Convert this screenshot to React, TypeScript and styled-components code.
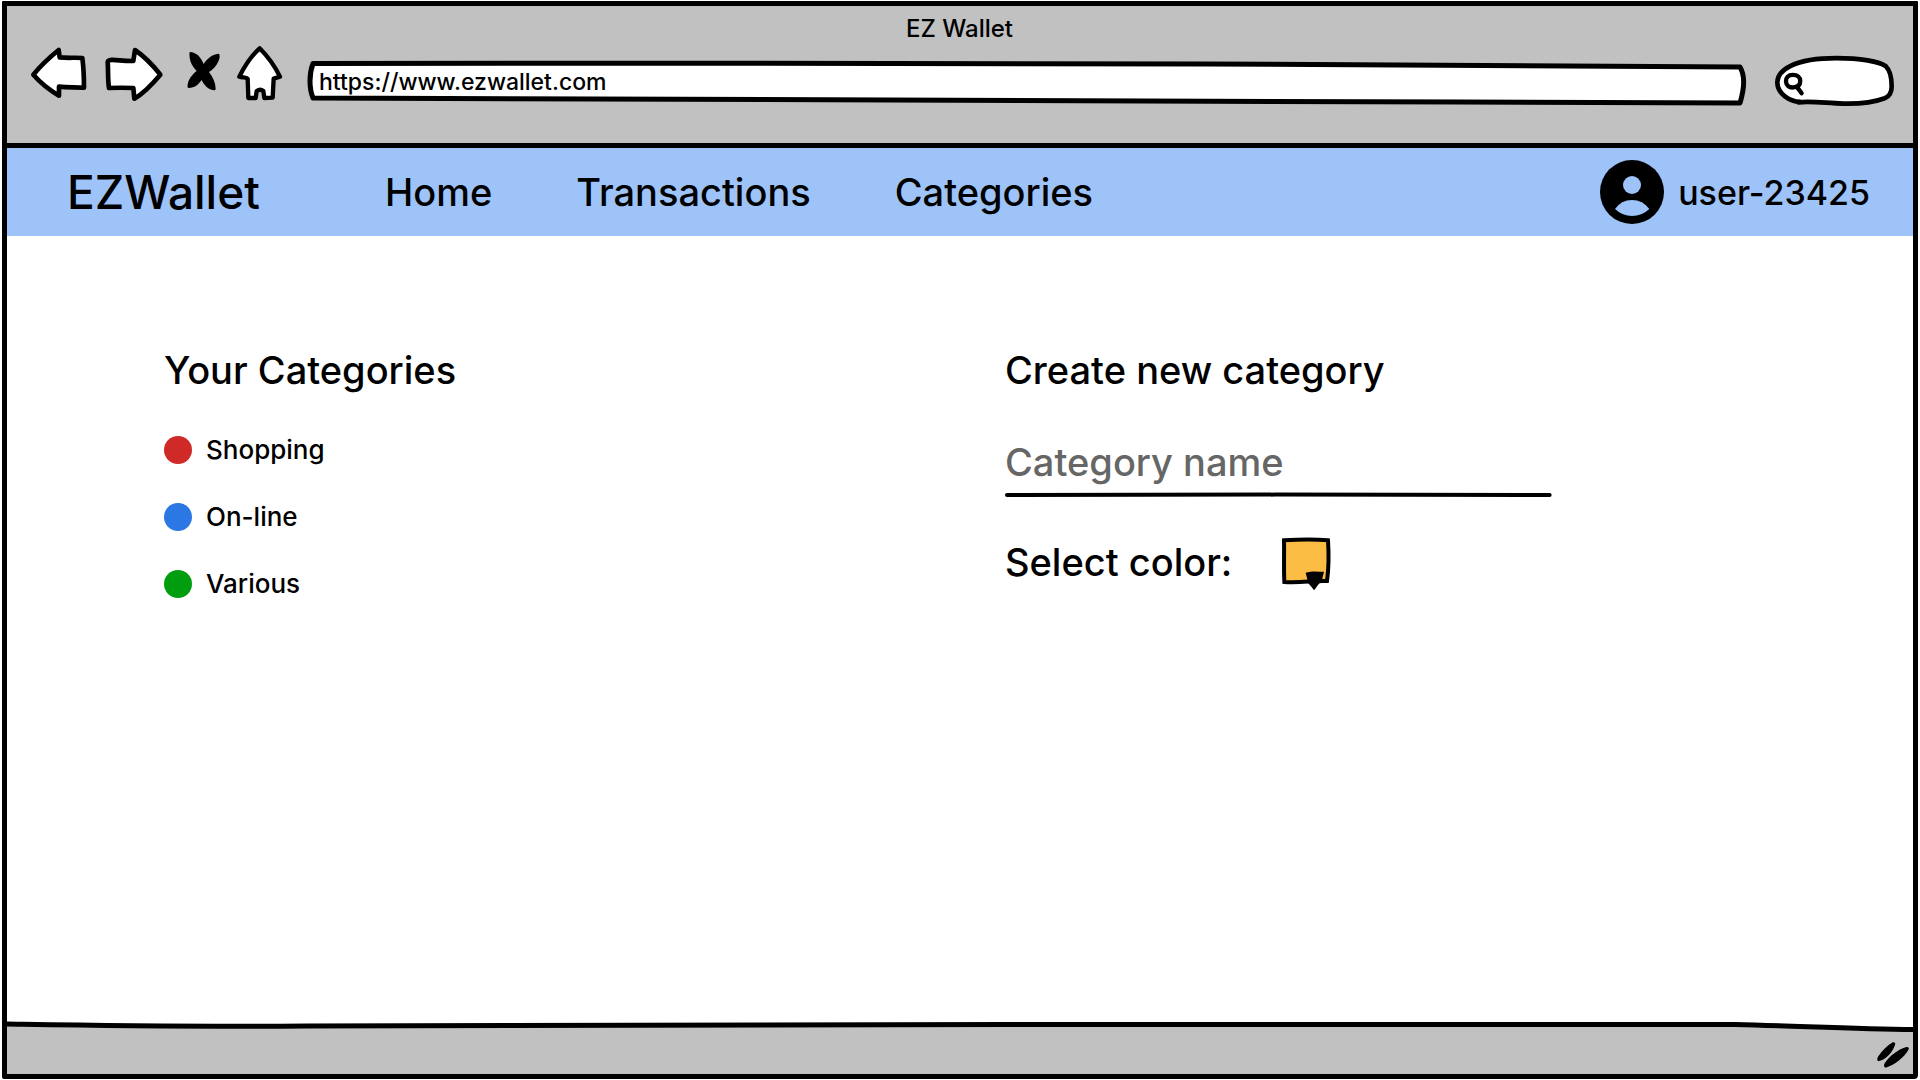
import React from "react";
import styled, { createGlobalStyle } from "styled-components";

const ink = "#000000";
const chrome = "#c1c1c1";
const sky = "#9ec3f8";

const GlobalStyle = createGlobalStyle`
  * { box-sizing: border-box; }
  body {
    margin: 0;
    background: #ffffff;
    color: ${ink};
    font-family: Inter, "Liberation Sans", sans-serif;
    font-weight: 500;
  }
  button, input { font: inherit; color: inherit; }
`;

const Window = styled.div`
  display: flex;
  flex-direction: column;
  min-height: calc(100vh - 2px);
  margin: 1px 2px;
  border: 5px solid ${ink};
  border-radius: 1px 1px 4px 2px;
`;

const Chrome = styled.header`
  padding: 6px 19px 37px 24px;
  background: ${chrome};
  border-bottom: 5px solid ${ink};
`;

const WindowTitle = styled.div`
  padding-right: 6px;
  text-align: center;
  font-size: 24px;
  line-height: 34px;
`;

const Toolbar = styled.div`
  display: flex;
  align-items: flex-end;
`;

const ToolGroup = styled.div`
  display: flex;
  align-items: flex-start;
  gap: 18px;
  padding-bottom: 5px;
`;

const PlainButton = styled.button`
  display: block;
  padding: 0;
  border: 0;
  background: none;
  cursor: pointer;
`;

const Sketch = styled.svg<{ $solid?: boolean }>`
  display: block;
  overflow: visible;
  stroke: ${(p) => (p.$solid ? "none" : ink)};
  stroke-linejoin: round;
  stroke-linecap: round;
`;

const Backdrop = styled(Sketch)`
  position: absolute;
  inset: 0;
  width: 100%;
  height: 100%;
`;

const AddressBar = styled.label`
  position: relative;
  flex: 1;
  height: 46px;
  margin: 0 28px 0 24px;
`;

const AddressInput = styled.input`
  position: relative;
  display: block;
  width: 100%;
  height: 44px;
  padding: 0 12px;
  border: 0;
  outline: 0;
  background: none;
  font-size: 23px;
`;

const SearchBox = styled.label`
  position: relative;
  width: 119px;
  height: 50px;
`;

const SearchInput = styled.input`
  position: relative;
  display: block;
  width: 100%;
  height: 100%;
  padding: 0 12px 0 32px;
  border: 0;
  outline: 0;
  background: none;
  font-size: 23px;
`;

const SiteBar = styled.nav`
  display: flex;
  align-items: center;
  height: 88px;
  padding: 0 43px 0 60px;
  background: ${sky};
`;

const Brand = styled.a`
  flex: 0 0 318px;
  color: inherit;
  text-decoration: none;
  font-size: 46px;
`;

const Links = styled.div`
  display: flex;
  flex: 1;
  gap: 84px;
`;

const NavLink = styled.a`
  color: inherit;
  text-decoration: none;
  font-size: 38px;
`;

const Account = styled.a`
  display: flex;
  align-items: center;
  gap: 14px;
  color: inherit;
  text-decoration: none;
  font-size: 34px;
`;

const Content = styled.main`
  display: grid;
  grid-template-columns: 1fr 1fr;
  flex: 1;
  align-items: start;
  padding: 110px 67px 40px 157px;
`;

const Heading = styled.h2`
  margin: 0;
  font-size: 38px;
  font-weight: 500;
  line-height: 48px;
`;

const CategoryList = styled.ul`
  display: flex;
  flex-direction: column;
  gap: 31px;
  margin: 38px 0 0;
  padding: 0;
  list-style: none;
`;

const Category = styled.li`
  display: flex;
  align-items: center;
  gap: 14px;
  font-size: 26px;
  line-height: 36px;
`;

const Dot = styled.span<{ $color: string }>`
  width: 28px;
  height: 28px;
  border-radius: 50%;
  background: ${(p) => p.$color};
`;

const NameField = styled.div`
  width: 65%;
  margin-top: 44px;
`;

const NameInput = styled.input`
  display: block;
  width: 100%;
  height: 48px;
  padding: 0;
  border: 0;
  outline: 0;
  background: none;
  font-size: 38px;
  &::placeholder { color: #666666; opacity: 1; }
`;

const Rule = styled(Sketch)`
  width: 100%;
  height: 18px;
`;

const ColorRow = styled.div`
  display: flex;
  align-items: flex-start;
  gap: 50px;
  margin-top: 34px;
  font-size: 38px;
  line-height: 48px;
`;

const StatusBar = styled.footer`
  position: relative;
  display: flex;
  align-items: center;
  justify-content: flex-end;
  height: 52px;
  padding: 14px 4px 0 0;
`;

const Grip = styled(Sketch)`
  position: relative;
`;

const categories = [
  { name: "Shopping", color: "#cf2a27" },
  { name: "On-line", color: "#2b78e4" },
  { name: "Various", color: "#009e0f" },
];

export default function App() {
  return (
    <>
      <GlobalStyle />
      <Window>
        <Chrome>
          <WindowTitle>EZ Wallet</WindowTitle>
          <Toolbar>
            <ToolGroup>
              <PlainButton type="button" aria-label="Back">
                <Sketch width="56" height="55" viewBox="34 18 168 165" fill="#fff" strokeWidth="14">
                  <path d="M41 104C62 78 90 52 117 30L120 52C145 55 165 52 188 54C192 85 193 115 193 143C170 141 145 143 118 140L118 167C90 150 62 128 41 104Z" />
                </Sketch>
              </PlainButton>
              <PlainButton type="button" aria-label="Forward">
                <Sketch width="58" height="55" viewBox="256 18 174 165" fill="#fff" strokeWidth="14">
                  <path d="M264 66C266 58 280 59 300 61C318 63 330 63 341 63L346 30C375 50 400 76 422 104C400 130 375 158 344 176L341 144C315 143 290 143 268 144C264 120 266 90 264 66Z" />
                </Sketch>
              </PlainButton>
              <PlainButton type="button" aria-label="Stop">
                <Sketch $solid width="38" height="55" viewBox="484 18 114 165">
                  <path d="M510 36C532 37 545 54 552 72C561 58 575 43 597 41C602 43 600 55 597 62C590 78 580 89 568 96C580 112 588 130 588 146C588 150 586 151 582 151C564 148 554 136 546 120C535 135 525 143 508 144C503 144 503 140 504 134C506 118 518 103 531 93C514 76 507 55 510 36Z" />
                </Sketch>
              </PlainButton>
              <PlainButton type="button" aria-label="Home page">
                <Sketch width="46" height="55" viewBox="652 18 138 165" fill="#fff" strokeWidth="13">
                  <path d="M720 25C692 50 672 84 659 110C668 113 680 112 684 116L686 174L708 174L711 153Q722 146 731 153L734 174L759 173L762 116L781 110C766 80 745 50 720 25Z" />
                </Sketch>
              </PlainButton>
            </ToolGroup>
            <AddressBar>
              <Backdrop viewBox="0 0 1440 46" preserveAspectRatio="none" fill="#fff" strokeWidth="5">
                <path vectorEffect="non-scaling-stroke" d="M6 3.5C300 3 700 3 900 4L1433 7C1439 17 1437 30 1433 43C1000 42 650 39 6 38C2 28 2 14 6 3.5Z" />
              </Backdrop>
              <AddressInput aria-label="Address" defaultValue="https://www.ezwallet.com" />
            </AddressBar>
            <SearchBox>
              <Backdrop viewBox="645 172 358 148" preserveAspectRatio="none" fill="#fff" strokeWidth="14">
                <path d="M720 308C690 306 652 285 652 250C652 215 700 178 830 178C900 178 960 188 978 202C994 217 996 240 996 262C996 285 985 293 975 297C940 310 890 314 850 313C800 312 760 305 715 309" />
                <path fill="none" strokeWidth="13" d="M699 228C685 228 677 236 678 248C679 260 688 266 700 265C713 264 721 257 721 246C721 235 713 228 699 228ZM712 265L725 282" />
              </Backdrop>
              <SearchInput aria-label="Search" />
            </SearchBox>
          </Toolbar>
        </Chrome>

        <SiteBar>
          <Brand href="#home">EZWallet</Brand>
          <Links>
            <NavLink href="#home">Home</NavLink>
            <NavLink href="#transactions">Transactions</NavLink>
            <NavLink href="#categories">Categories</NavLink>
          </Links>
          <Account href="#account">
            <Sketch $solid width="64" height="64" viewBox="30 30 192 192">
              <circle cx="126" cy="126" r="96" />
              <circle cx="126" cy="105" r="27" fill={sky} />
              <path fill={sky} d="M75 177Q94 150 126 150Q158 150 178 177Q156 198 126 198Q97 198 75 177Z" />
            </Sketch>
            user-23425
          </Account>
        </SiteBar>

        <Content>
          <section>
            <Heading>Your Categories</Heading>
            <CategoryList>
              {categories.map((c) => (
                <Category key={c.name}>
                  <Dot $color={c.color} />
                  {c.name}
                </Category>
              ))}
            </CategoryList>
          </section>
          <section>
            <Heading>Create new category</Heading>
            <NameField>
              <NameInput aria-label="Category name" placeholder="Category name" />
              <Rule viewBox="0 0 547 18" preserveAspectRatio="none" fill="none" strokeWidth="4">
                <path d="M2 9C150 8 400 9 545 9" />
              </Rule>
            </NameField>
            <ColorRow>
              <label htmlFor="color">Select color:</label>
              <PlainButton type="button" id="color" aria-haspopup="true">
                <Sketch width="49" height="53" viewBox="36 38 147 159" strokeWidth="12">
                  <path fill="#fcbd44" strokeLinejoin="miter" d="M42 45C90 42 140 42 174 45C177 90 176 130 171 167C130 165 90 174 43 170C41 130 43 90 42 45Z" />
                  <path stroke="none" strokeWidth="0" d="M107 142C125 136 145 139 162 139C159 150 157 160 155 169C148 172 140 184 132 195C126 186 121 180 114 173C113 162 109 152 107 142Z" />
                </Sketch>
              </PlainButton>
            </ColorRow>
          </section>
        </Content>

        <StatusBar>
          <Backdrop viewBox="0 0 1906 52" preserveAspectRatio="none">
            <path fill={chrome} strokeWidth="0" d="M0 3L300 4L1728 3L1906 8V52H0Z" />
            <path fill="none" strokeWidth="5" strokeLinecap="butt" d="M0 2C60 3 160 5 300 4L1000 2.5L1728 2.5C1790 4 1850 7 1906 7.5" />
          </Backdrop>
          <Grip $solid width="32" height="26" viewBox="50 66 96 78">
            <path d="M97 67C104 66 106 70 104 75C95 100 75 120 53 124C49 118 51 113 55 107C67 90 80 78 97 67Z" />
            <path d="M138 81C144 80 147 84 145 88C135 110 100 138 76 143C70 141 70 136 73 130C90 105 115 88 138 81Z" />
          </Grip>
        </StatusBar>
      </Window>
    </>
  );
}
